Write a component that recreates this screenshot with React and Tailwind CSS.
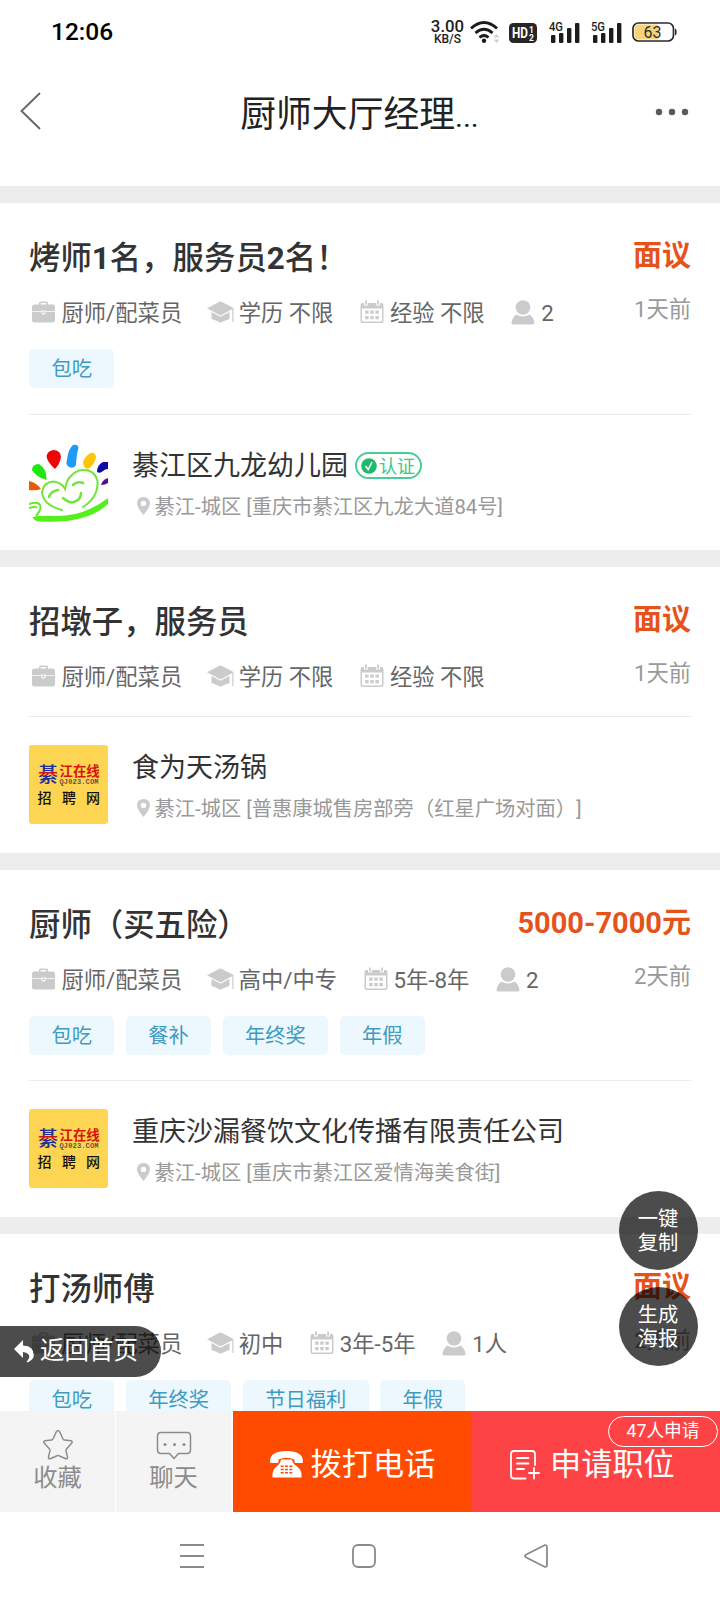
import React from "react";

const FONT = "font-['Roboto','Noto_Sans_CJK_SC',sans-serif]";

function BriefcaseIcon() {
  return (
    <svg width="23" height="22" viewBox="0 0 23 22" fill="#cbcbcb">
      <path d="M7 4V2.2Q7 .5 8.700 .5h5.600Q16 .5 16 2.200V4h-1.600V2.600Q14.400 2 13.800 2H9.200Q8.600 2 8.600 2.600V4z" />
      <path d="M2.500 3.500h18Q23 3.500 23 6v4.200h-9.200V9.500H9.200v.7H0V6Q0 3.500 2.500 3.500z" />
      <path d="M0 11h9.200q.3 2.800 2.300 2.800t2.300-2.800H23v8q0 2.500-2.500 2.500h-18Q0 21.500 0 19z" />
      <path d="M10.400 10.300h2.200v1.300q0 1-1.100 1t-1.100-1z" />
    </svg>
  );
}

function CapIcon() {
  return (
    <svg width="28" height="22" viewBox="0 0 28 22" fill="#cbcbcb">
      <path d="M13.500 .3 27 7.300 13.500 14.500 0 7.300z" />
      <path d="M4.500 11 13.500 15.800 22.500 11v7Q18.500 19 13.500 21.700 8.500 19 4.500 18z" />
      <path d="M25.300 8h1.200v13h-1.200z" />
    </svg>
  );
}

function CalendarIcon() {
  return (
    <svg width="24" height="24" viewBox="0 0 24 24" fill="#cbcbcb">
      <path
        fillRule="evenodd"
        d="M2.500 3h1.500v2.500h3.800V3h8.400v2.500H20V3h1.500Q23.500 3 23.500 5v16q0 2-2 2h-19q-2 0-2-2V5q0-2 2-2zM2 8.500v12q0 1 1 1h18q1 0 1-1v-12z"
      />
      <path d="M5 .5h1.800v4H5zM17.200 .5H19v4h-1.800z" />
      <path d="M5.200 10.500h3.400v3.200H5.200zM10.300 10.500h3.400v3.200h-3.400zM15.400 10.500h3.400v3.200h-3.400zM5.200 16h3.400v3.200H5.200zM10.300 16h3.400v3.200h-3.400zM15.400 16h3.400v3.200h-3.400z" />
    </svg>
  );
}

function PersonIcon() {
  return (
    <svg width="24" height="25" viewBox="0 0 24 25" fill="#cbcbcb">
      <circle cx="12" cy="7.500" r="7.300" />
      <path d="M5.500 14.500Q8.500 16.500 12 16.500t6.500-2Q22.500 17 23.500 22.500q.2 2-1.500 2H2q-1.700 0-1.500-2Q1.500 17 5.500 14.500z" />
    </svg>
  );
}

function PinIcon() {
  return (
    <svg className="-mt-[2px]" width="13" height="18" viewBox="0 0 13 18" fill="#cbcbcb">
      <path fillRule="evenodd" d="M6.500 0Q13 .4 13 6.500 12.500 11 6.500 18 .5 11 0 6.500 0 .4 6.500 0zm0 3.700a2.700 2.700 0 1 0 0 5.400 2.700 2.700 0 1 0 0-5.400z" />
    </svg>
  );
}

const ICONS = { job: BriefcaseIcon, edu: CapIcon, exp: CalendarIcon, num: PersonIcon };

function KidsLogo() {
  return (
    <svg width="79" height="79" viewBox="0 0 79 79" className="shrink-0">
      <path d="M17.500 13Q19 7 25 7q7 1 7 7-1 7-6 12Q18 19 17.500 13z" fill="#f00505" />
      <path d="M44 2q5-1 5.500 3-2 6-2.500 17-2 4-7 2-4-3-2-7 1-11 6-15z" fill="#1e9bf5" />
      <path d="M54 19q3-8 9-9.500 4 1 4 5-2 8-8 11.500-5-1-5-7z" fill="#fdc50a" />
      <path d="M68 29q0-7 6-10h5v7q-3 0-5 2-3 3-6 1z" fill="#0a0aa5" />
      <path d="M72 42q1-5 7-7v5q-3 2-7 2z" fill="#560a96" />
      <path d="M3 27q0-6 7-6 8 5 7.500 16Q7 34 3 27z" fill="#1ce80c" />
      <path d="M0 38q8 2 12 8-5 2-12 1z" fill="#ea5808" />
      <path d="M33 67Q14 62 13 49q2-10 11-10.500 8 .5 12 7.500 2-14 14-18.500 15-3 18.500 10.500 1 16-14.500 26" fill="none" stroke="#70e63a" strokeWidth="2" strokeLinecap="round" />
      <path d="M20 54q2-6 9-7M44 42q4-4 10-2M34 55q8 7 13 3 5-2 5-8" fill="none" stroke="#70e63a" strokeWidth="2.500" strokeLinecap="round" />
      <path d="M0 61q9-3 11 1 2 4-4 11M0 65q7-2 8 0" fill="none" stroke="#62ec24" strokeWidth="2" />
      <path d="M3.500 74q8-2 21-1 30 1 54.500-18v6Q58 81 12 78.500q-7 0-8.500-4.500z" fill="#55f01c" />
    </svg>
  );
}

function SiteLogo() {
  return (
    <svg width="79" height="79" viewBox="0 0 79 79" className="shrink-0 rounded-[3px] bg-[#fed453]">
      <defs>
        <linearGradient id="logoMark" x1="0" y1="0" x2="0" y2="1">
          <stop offset="0.420" stopColor="#1f2f9c" />
          <stop offset="0.420" stopColor="#c81420" />
          <stop offset="0.580" stopColor="#c81420" />
          <stop offset="0.580" stopColor="#1f2f9c" />
        </linearGradient>
      </defs>
      <g fontFamily="'Noto Sans CJK SC', sans-serif">
        <text x="9" y="36.500" fontSize="20" fontWeight="500" fill="url(#logoMark)">綦</text>
        <text x="30.500" y="30.500" fontSize="13.400" fontWeight="700" fill="#d4140a">江在线</text>
        <text y="58" fontSize="14" fontWeight="500" fill="#141008">
          <tspan x="8.500">招</tspan>
          <tspan x="33">聘</tspan>
          <tspan x="57">网</tspan>
        </text>
      </g>
      <text x="30.500" y="38.500" fontSize="7" fontWeight="700" fill="#5a5442" fontFamily="'Liberation Mono', monospace" textLength="39">QJ023.COM</text>
    </svg>
  );
}

function CertBadge() {
  return (
    <span className="-mt-px ml-[7px] flex h-[27px] w-[67px] items-center rounded-full border-2 border-[#45cf90] pl-[4px] text-[18px] text-[#35cb87]">
      <svg className="shrink-0" width="16" height="16" viewBox="0 0 16 16">
        <circle cx="8" cy="8" r="7.800" fill="#1dba6c" />
        <path d="M4.500 8l2.700 3.600L11 4.200" fill="none" stroke="#fff" strokeWidth="1.600" />
      </svg>
      <span className="ml-[2px] mt-px whitespace-nowrap">认证</span>
    </span>
  );
}

function companyRowClass(tags) {
  if (!tags) return "mt-[11px] flex h-[137px] border-t border-[#ebebeb] pt-[28px]";
  if (tags.length === 1) return "mt-[11px] flex h-[136px] border-t border-[#ebebeb] pt-[28px]";
  return "mt-[10px] flex h-[137px] border-t border-[#ebebeb] pt-[28px]";
}

function JobCard({ job }) {
  return (
    <article className="shrink-0 border-b-[17px] border-[#ededed] bg-white px-[29px]">
      <div className="flex h-[82px] items-end justify-between">
        <h2 className="mb-[6px] whitespace-nowrap text-[31.400px] font-medium leading-[40px] text-[#333]">{job.title}</h2>
        <span className="mb-[8px] whitespace-nowrap text-[29px] font-bold leading-[41px] text-[#e5531a]">{job.pay}</span>
      </div>
      <div className="flex h-[56px] justify-between">
        <div className="-ml-[1.500px] flex h-[56px] items-center gap-[22.500px] text-[22.300px] text-[#666]">
          {job.meta.map(([kind, text]) => {
            const Icon = ICONS[kind];
            return (
              <span key={kind} className="flex items-center whitespace-nowrap">
                <span className="flex w-[34px] justify-center pb-[2px] pr-[2px]"><Icon /></span>
                <span className="pt-px">{text}</span>
              </span>
            );
          })}
        </div>
        <span className="pt-[7px] text-[22.300px] leading-[34px] text-[#999]">{job.time}</span>
      </div>
      {job.tags && (
        <div className="flex h-[62px] gap-[11.400px] pt-[8px]">
          {job.tags.map((tag) => (
            <span key={tag} className="h-[39px] whitespace-nowrap rounded-[5px] bg-[#edf8fe] px-[22.400px] text-[20.300px] leading-[41px] text-[#3f9abf]">
              {tag}
            </span>
          ))}
        </div>
      )}
      {job.company && (
        <div className={companyRowClass(job.tags)}>
          {job.logo === "kids" ? <KidsLogo /> : <SiteLogo />}
          <div className="ml-[24px]">
            <div className="flex h-[44px] items-center whitespace-nowrap pt-[2px] text-[27px] text-[#333]">
              {job.company}
              {job.verified && <CertBadge />}
            </div>
            <div className="flex h-[38px] items-center whitespace-nowrap pl-[4.500px] pt-[2px] text-[20.300px] text-[#999]">
              <PinIcon />
              <span className="ml-[5px]">{job.place}</span>
            </div>
          </div>
        </div>
      )}
    </article>
  );
}

const JOBS = [
  {
    title: <>烤师<b>1</b>名，服务员<b>2</b>名！</>,
    pay: "面议",
    time: "1天前",
    meta: [["job", "厨师/配菜员"], ["edu", "学历 不限"], ["exp", "经验 不限"], ["num", "2"]],
    tags: ["包吃"],
    logo: "kids",
    company: "綦江区九龙幼儿园",
    verified: true,
    place: "綦江-城区 [重庆市綦江区九龙大道84号]",
  },
  {
    title: "招墩子，服务员",
    pay: "面议",
    time: "1天前",
    meta: [["job", "厨师/配菜员"], ["edu", "学历 不限"], ["exp", "经验 不限"]],
    logo: "site",
    company: "食为天汤锅",
    place: "綦江-城区 [普惠康城售房部旁（红星广场对面）]",
  },
  {
    title: "厨师（买五险）",
    pay: "5000-7000元",
    time: "2天前",
    meta: [["job", "厨师/配菜员"], ["edu", "高中/中专"], ["exp", "5年-8年"], ["num", "2"]],
    tags: ["包吃", "餐补", "年终奖", "年假"],
    logo: "site",
    company: "重庆沙漏餐饮文化传播有限责任公司",
    place: "綦江-城区 [重庆市綦江区爱情海美食街]",
  },
  {
    title: "打汤师傅",
    pay: "面议",
    time: "2天前",
    meta: [["job", "厨师/配菜员"], ["edu", "初中"], ["exp", "3年-5年"], ["num", "1人"]],
    tags: ["包吃", "年终奖", "节日福利", "年假"],
  },
];

function Signal({ label }) {
  return (
    <svg width="31" height="24" viewBox="0 -2 31 24" fill="#1c1c1c" overflow="visible">
      <text x="0" y="8.500" fontSize="12.500" fontWeight="500" fontFamily="Roboto, sans-serif" textLength="14" lengthAdjust="spacingAndGlyphs">{label}</text>
      <rect x="2" y="13" width="4.400" height="8" rx="1" />
      <rect x="10" y="11" width="4.400" height="10" rx="1" />
      <rect x="18" y="6" width="4.400" height="15" rx="1" />
      <rect x="26" y="1" width="4.400" height="20" rx="1" />
    </svg>
  );
}

function StatusBar() {
  return (
    <div className="flex h-[64px] items-center justify-between pl-[51px] pr-[43px]">
      <span className="pt-px text-[24.500px] font-medium text-black">12:06</span>
      <div className="flex items-center">
        <div className="flex w-[33px] flex-col items-center text-[#1c1c1c]">
          <span className="text-[16.800px] font-medium leading-[14px]">3.00</span>
          <span className="text-[12px] font-medium leading-[12px]">KB/S</span>
        </div>
        <svg className="ml-[6px]" width="31" height="24" viewBox="0 0 31 24" fill="none" stroke="#1c1c1c" strokeWidth="3">
          <path d="M1 8.500Q14 -3.500 27 8.500" />
          <path d="M5.500 13Q14 5.500 22.500 13" />
          <path d="M9.500 17.500Q14 13.500 18.500 17.500" />
          <circle cx="14" cy="20.800" r="2.200" fill="#1c1c1c" stroke="none" />
          <path d="M23.500 17.500 26.500 14l3 3.500zM23.500 19.500l3 3.500 3-3.500z" fill="#d0d0d0" stroke="none" />
        </svg>
        <svg className="ml-[8px] mt-px" width="28" height="20" viewBox="0 0 28 20">
          <rect width="28" height="20" rx="4.500" fill="#262626" />
          <g fill="#fff" fontFamily="Roboto, sans-serif" fontWeight="700">
            <text x="3" y="15.200" fontSize="14" textLength="16" lengthAdjust="spacingAndGlyphs">HD</text>
            <text x="20" y="9.500" fontSize="8.500">1</text>
            <text x="20" y="17.500" fontSize="8.500">2</text>
          </g>
        </svg>
        <div className="ml-[12px] flex gap-[11px]">
          <Signal label="4G" />
          <Signal label="5G" />
        </div>
        <svg className="ml-[10px]" width="45" height="20" viewBox="0 0 45 20">
          <rect x="1" y="1" width="40.500" height="18" rx="5.500" fill="#fff" stroke="#2b2b2b" strokeWidth="1.700" />
          <path d="M7 2.500h19v15H7q-4.500 0-4.500-4.500V7Q2.500 2.500 7 2.500z" fill="#f8d377" />
          <path d="M43 6.500q1.500.5 1.500 2v3q0 1.500-1.500 2z" fill="#2b2b2b" />
          <text x="20.500" y="15.500" fontSize="16" fill="#2b2b2b" textAnchor="middle" fontFamily="Roboto, sans-serif">63</text>
        </svg>
      </div>
    </div>
  );
}

function Header() {
  return (
    <header className="flex h-[122px] items-start justify-between pl-[20px] pr-[31px]">
      <svg className="mt-[28px]" width="52" height="38" viewBox="0 0 52 38" fill="none" stroke="#666" strokeWidth="1.900">
        <path d="M20 1 1.500 19 20 37" />
      </svg>
      <h1 className="-ml-[8px] mt-[28px] whitespace-nowrap text-[35.800px] font-normal leading-[46px] text-[#222]">
        厨师大厅经理<span className="text-[30px]">...</span>
      </h1>
      <svg className="mt-[40px]" width="34" height="16" viewBox="0 0 34 16" fill="#5a5a5a">
        <circle cx="4" cy="8" r="3.200" />
        <circle cx="17" cy="8" r="3.200" />
        <circle cx="30" cy="8" r="3.200" />
      </svg>
    </header>
  );
}

function ActionBar() {
  return (
    <div className="relative flex h-[101px] shrink-0 bg-[#f4f4f4] text-[24.300px] text-[#8c8c8c]">
      <div className="flex w-[116px] flex-col items-center border-r border-white pt-[19px]">
        <svg width="30" height="30" viewBox="0 0 30 30" fill="none" stroke="#8c8c8c" strokeWidth="1.500" strokeLinejoin="round">
          <path d="M13.500 1.500q1.500-1.800 3 0l3.500 7.500q.4.900 1.400 1l6.600.8q1.800.6.800 2.200l-5.300 6q-.7.700-.5 1.700l1.500 6.500q0 2-1.800 1.600l-6.700-3.100q-1-.5-2 0l-6.700 3.100q-1.800.4-1.800-1.600L7 20.700q.2-1-.5-1.700L1.200 13q-1-1.600.8-2.200L8.600 10q1-.1 1.400-1z" />
        </svg>
        <span className="mt-px leading-[34px]">收藏</span>
      </div>
      <div className="flex w-[117px] flex-col items-center border-r-2 border-[#fafafa] pt-[20px]">
        <svg width="36" height="29" viewBox="0 0 36 29" fill="none" stroke="#8c8c8c" strokeWidth="1.500" strokeLinejoin="round">
          <path d="M5 1.500h26q3.500 0 3.500 3.500v14q0 3.500-3.500 3.500h-8.500L18 27.500l-4.500-5H5q-3.500 0-3.500-3.500V5Q1.500 1.500 5 1.500z" />
          <g fill="#8c8c8c" stroke="none">
            <circle cx="9" cy="13.500" r="1.500" />
            <circle cx="18.500" cy="13.500" r="1.500" />
            <circle cx="28" cy="13.500" r="1.500" />
          </g>
        </svg>
        <span className="mt-px leading-[34px]">聊天</span>
      </div>
      <div className="flex w-[239px] items-center justify-center gap-[8px] bg-[#ff4a02] text-[31.200px] text-white">
        <svg className="mt-[5px] shrink-0" width="33" height="27" viewBox="0 0 33 27" fill="#fff">
          <path d="M0 10.500Q0 0 16.500 0T33 10.500q0 1.500-1 1.500h-6.500q-1 0-1-1.500V8.500Q21 6.800 16.500 6.800T8.500 8.500v2q0 1.500-1 1.500H1q-1 0-1-1.500z" />
          <path fillRule="evenodd" d="M11 8.500h11q.5 4 5 7 4 2.500 4.500 7.500v3.500h-29V23Q3 18 6.500 15.500q4-3 4.500-7zM10.700 14.500v1.500h3v-1.500zm4.300 0v1.500h3v-1.500zm4.300 0v1.500h3v-1.500zM10.700 17.800v1.500h3v-1.500zm4.300 0v1.500h3v-1.500zm4.300 0v1.500h3v-1.500zM10.700 21v1.500h3V21zm4.300 0v1.500h3V21zm4.300 0v1.500h3V21z" />
        </svg>
        <span className="mt-[8px] whitespace-nowrap">拨打电话</span>
      </div>
      <div className="flex w-[248px] items-center gap-[10px] bg-[#fd4345] pl-[38px] text-[31.200px] text-white">
        <svg className="mt-[6px] shrink-0" width="30" height="30" viewBox="0 0 30 30" fill="none" stroke="#fff" strokeWidth="1.800" strokeLinecap="round">
          <path d="M25 15V4q0-3-3-3H4Q1 1 1 4v21.500q0 3 3 3h11.500M7 8h11.500M7 13.500h11.500M7 19h7M19 23h10M24 18v10.500" />
        </svg>
        <span className="mt-[8px] whitespace-nowrap">申请职位</span>
      </div>
      <span className="absolute right-[2px] top-[5px] flex h-[31px] w-[110px] items-center justify-center rounded-full border border-white bg-[#fd4345] text-[17.700px] text-white">
        47人申请
      </span>
    </div>
  );
}

function SystemNav() {
  return (
    <nav className="flex h-[88px] shrink-0 items-center justify-center gap-[148px] bg-white pl-[8px]">
      <svg width="24" height="24" viewBox="0 0 24 24" stroke="#8a8a8a" strokeWidth="1.800">
        <path d="M0 1h24M0 12h24M0 23h24" />
      </svg>
      <svg width="24" height="24" viewBox="0 0 24 24" fill="none" stroke="#8a8a8a" strokeWidth="1.800">
        <rect x="1" y="1" width="22" height="22" rx="5" />
      </svg>
      <svg width="24" height="24" viewBox="0 0 24 24" fill="none" stroke="#8a8a8a" strokeWidth="1.800" strokeLinejoin="round">
        <path d="M1.800 10.700 20.500 1.200q2.500-.5 2.500 1.800v18q0 2.300-2.500 1.800L1.800 13.300q-1.600-1.300 0-2.600z" />
      </svg>
    </nav>
  );
}

export default function App() {
  return (
    <div className={`flex h-[1600px] w-[720px] flex-col overflow-hidden bg-white [text-spacing-trim:space-all] ${FONT}`}>
      <StatusBar />
      <Header />
      <main className="relative flex min-h-0 flex-1 flex-col overflow-hidden border-t-[17px] border-[#ededed]">
        {JOBS.map((job, index) => (
          <JobCard key={index} job={job} />
        ))}
        <button className="absolute left-0 top-[1123px] flex h-[51px] w-[161px] items-center rounded-r-full bg-black/70 pl-[14px] text-[24.500px] text-white">
          <svg width="20" height="23" viewBox="0 0 20 23" fill="#fff">
            <path d="M9 0v5.500Q20 6 19.800 15.500 19.500 20 13 22.500q-1-.3 0-1.200Q19 14 9 12v6L0 9z" />
          </svg>
          <span className="ml-[6px] whitespace-nowrap">返回首页</span>
        </button>
        <button className="absolute left-[619px] top-[988px] flex h-[79px] w-[79px] flex-col items-center justify-center rounded-full bg-black/70 pr-px text-[20.300px] leading-[24px] text-white">
          <span>一键</span>
          <span>复制</span>
        </button>
        <button className="absolute left-[619px] top-[1084px] flex h-[79px] w-[79px] flex-col items-center justify-center rounded-full bg-black/70 pr-px text-[20.300px] leading-[24px] text-white">
          <span>生成</span>
          <span>海报</span>
        </button>
      </main>
      <ActionBar />
      <SystemNav />
    </div>
  );
}
